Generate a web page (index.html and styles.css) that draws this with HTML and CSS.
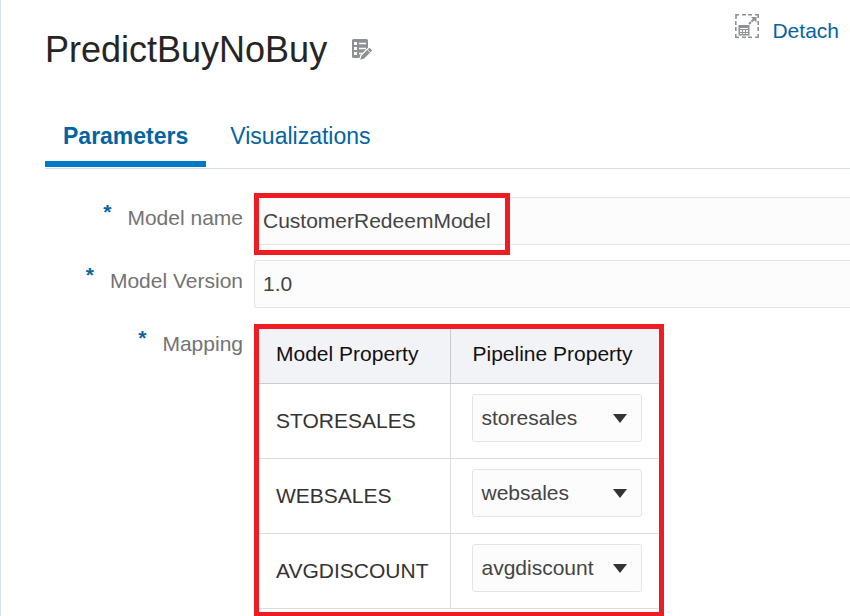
FILE: index.html
```html
<!DOCTYPE html>
<html lang="en">
<head>
<meta charset="utf-8">
<title>PredictBuyNoBuy</title>
<link rel="stylesheet" href="styles.css">
</head>
<body>
<main class="panel">
  <header class="header">
    <h1 class="title">PredictBuyNoBuy</h1>
    <button class="edit" type="button" aria-label="Edit">
      <svg width="22" height="22" viewBox="0 0 22 22">
        <path d="M2.500 0h13q1.500 0 1.500 1.500V10L9 17v2H2.500Q1 19 1 17.500v-16Q1 0 2.500 0z" fill="#8e9093"/>
        <path d="M3 3h3v3H3zM3 8h3v3H3zM3 13h3v3H3zM8 3.700h7v1.600H8zM8 8.700h7v1.600H8zM8 13.700h4v1.600H8z" fill="#fff"/>
        <path d="M8.500 21.500l1.300-5L17.500 8.800q1-1 2 0l1.700 1.700q1 1 0 2L13.500 20z" fill="#8e9093" stroke="#fff" stroke-width="1.200"/>
        <path d="M16.300 10.500l3.200 3.200" stroke="#fff" stroke-width="1"/>
      </svg>
    </button>
    <a class="detach" href="#">
      <svg width="24" height="24" viewBox="0 0 24 24" fill="none" stroke="#8e9093">
        <path d="M1 5V.8h3M7 .8h4M13 .8h4M20 .8h3.200V4M23.200 7v4M23.200 13v4M23.200 20v3.200H20M17 23.200h-4M11 23.200H7M4 23.200H.8V20M.8 17v-4M.8 11V7" stroke-width="1.600"/>
        <path d="M3.500 11h11v10.500h-11z" fill="#8e9093" stroke="none"/>
        <path d="M5 14h8v1H5zM5 16h2v2H5zM8 16h2v2H8zM11 16h2v2h-2zM5 19h2v1H5zM8 19h2v1H8zM11 19h2v1h-2z" fill="#fff" stroke="none"/>
        <path d="M14 10l2-2M16.500 7.500L20 4" stroke-width="2"/>
        <path d="M16 3h5.500v5.500z" fill="#8e9093" stroke="none"/>
      </svg>
      <span class="detach-text">Detach</span>
    </a>
  </header>

  <nav class="tabs">
    <a class="tab tab-active" href="#" aria-current="page">Parameters</a>
    <a class="tab" href="#">Visualizations</a>
  </nav>

  <form class="form">
    <label class="label" for="model-name"><span class="required">*</span>Model name</label>
    <div class="field marked-field">
      <input class="input" id="model-name" type="text" value="CustomerRedeemModel">
    </div>

    <label class="label" for="model-version"><span class="required">*</span>Model Version</label>
    <div class="field">
      <input class="input" id="model-version" type="text" value="1.0">
    </div>

    <div class="label" id="mapping-label"><span class="required">*</span>Mapping</div>
    <div class="mapping">
      <table class="table" aria-labelledby="mapping-label">
        <thead>
          <tr><th scope="col">Model Property</th><th scope="col">Pipeline Property</th></tr>
        </thead>
        <tbody>
          <tr>
            <td><label for="map-store">STORESALES</label></td>
            <td class="choice"><span class="select-box"><select class="select" id="map-store"><option>storesales</option></select><svg class="arrow" width="14" height="9" viewBox="0 0 14 9"><path d="M0 0h14L7 9z" fill="#333"/></svg></span></td>
          </tr>
          <tr>
            <td><label for="map-web">WEBSALES</label></td>
            <td class="choice"><span class="select-box"><select class="select" id="map-web"><option>websales</option></select><svg class="arrow" width="14" height="9" viewBox="0 0 14 9"><path d="M0 0h14L7 9z" fill="#333"/></svg></span></td>
          </tr>
          <tr>
            <td><label for="map-avg">AVGDISCOUNT</label></td>
            <td class="choice"><span class="select-box"><select class="select" id="map-avg"><option>avgdiscount</option></select><svg class="arrow" width="14" height="9" viewBox="0 0 14 9"><path d="M0 0h14L7 9z" fill="#333"/></svg></span></td>
          </tr>
        </tbody>
      </table>
    </div>
  </form>
</main>
</body>
</html>
```
FILE: styles.css
```css
*,
*::after { box-sizing: border-box; }

body {
  margin: 0;
  background: #fff;
  color: #333;
  font: 21px/24px "Liberation Sans", Arial, sans-serif;
}

.panel {
  height: 100vh;
  overflow: hidden;
  padding-left: 44px;
  border-left: 1px solid #d6dfe6;
}

.header {
  display: flex;
  align-items: flex-start;
}

.title {
  margin: 29px 0 0;
  color: #252525;
  font-size: 36px;
  font-weight: 400;
  line-height: 42px;
}

.edit {
  display: flex;
  margin: 39px 0 0 24px;
  padding: 0;
  border: 0;
  background: none;
}

.detach {
  display: flex;
  gap: 13px;
  margin: 14px 11px 0 auto;
  color: #0464a3;
  text-decoration: none;
}

.detach-text { padding-top: 5px; }

.tabs {
  display: flex;
  gap: 6px;
  margin-top: 50px;
  padding-bottom: 1px;
  border-bottom: 1px solid #d6dfe6;
}

.tab {
  padding: 0 18px 10px;
  border-bottom: 6px solid transparent;
  color: #0464a3;
  font-size: 23px;
  line-height: 30px;
  text-decoration: none;
}

.tab-active {
  border-bottom-color: #0079c8;
  font-weight: 700;
}

.form {
  display: grid;
  grid-template-columns: 198px 1fr;
  column-gap: 11px;
  row-gap: 15px;
  padding-top: 28px;
}

.label {
  display: flex;
  justify-content: flex-end;
  gap: 16px;
  padding-top: 9px;
  color: #737373;
}

.required {
  margin-top: -6px;
  color: #0464a3;
  font-weight: 700;
}

.field { position: relative; }

.input {
  display: block;
  width: 100%;
  height: 48px;
  padding: 0 8px;
  border: 1px solid #e4e4e4;
  border-right: 0;
  border-radius: 3px 0 0 3px;
  background: #fcfcfc;
  color: #444;
  font: inherit;
}

.marked-field::after,
.mapping::after {
  content: "";
  position: absolute;
  border: 5px solid #ef1c24;
  pointer-events: none;
}

.marked-field::after {
  top: -4px;
  left: 0;
  width: 256px;
  height: 62px;
}

.mapping {
  position: relative;
  justify-self: start;
  margin-top: 1px;
}

.mapping::after { inset: 0 0 -8px; }

.table {
  border-spacing: 0;
  text-align: left;
}

.table th,
.table td {
  padding: 0 22px;
  border-bottom: 1px solid #ddd;
}

.table th {
  height: 60px;
  border-bottom-color: #ccc;
  background: #f2f3f7;
  color: #111;
  font-weight: 400;
}

.table td { height: 75px; }

.table th:first-child,
.table td:first-child {
  width: 197px;
  border-right: 1px solid #ddd;
}

.table th:first-child { border-right-color: #ccc; }

.table th:last-child,
.table td:last-child { padding-left: 21px; }

.table .choice {
  padding-top: 10px;
  padding-bottom: 16px;
}

.select-box {
  display: block;
  position: relative;
  width: 170px;
}

.select {
  display: block;
  width: 100%;
  height: 48px;
  padding: 0 8px;
  border: 1px solid #e4e4e4;
  border-radius: 3px;
  background: #fcfcfc;
  color: #444;
  font: inherit;
  appearance: none;
}

.arrow {
  position: absolute;
  top: 20px;
  right: 15px;
  pointer-events: none;
}
```
